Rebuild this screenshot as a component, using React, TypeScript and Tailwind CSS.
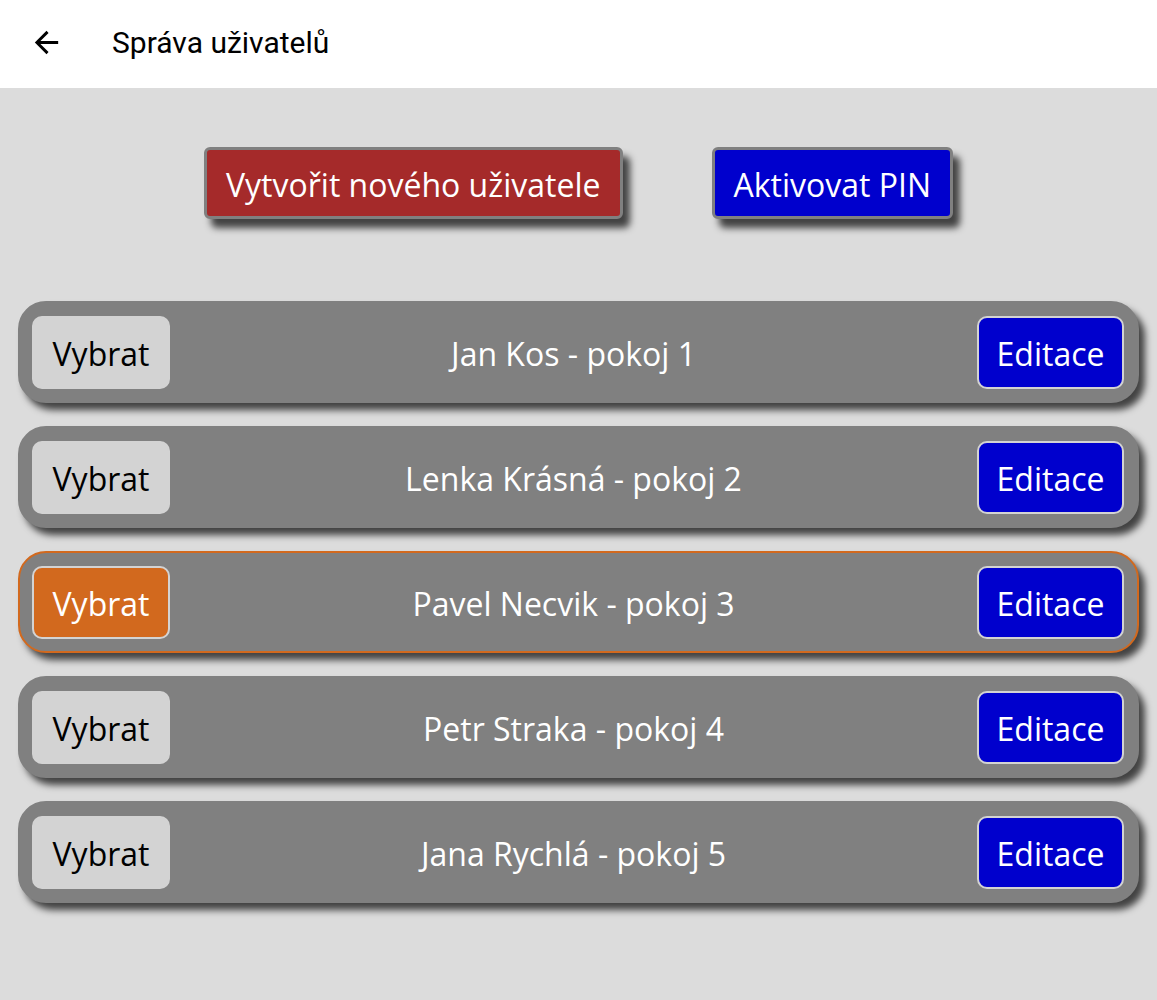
interface User {
  id: number;
  name: string;
  room: number;
}

const users: User[] = [
  { id: 1, name: 'Jan Kos', room: 1 },
  { id: 2, name: 'Lenka Krásná', room: 2 },
  { id: 3, name: 'Pavel Necvik', room: 3 },
  { id: 4, name: 'Petr Straka', room: 4 },
  { id: 5, name: 'Jana Rychlá', room: 5 },
];

const selectedId = 3;

function UserRow({ user }: { user: User }) {
  const selected = user.id === selectedId;
  return (
    <div
      className={
        selected
          ? 'flex h-[102px] items-center justify-between rounded-[28px] border-2 border-[#d2691e] bg-[#808080] pl-[12px] pr-[13px] shadow-[6px_7px_7px_rgba(0,0,0,0.7)]'
          : 'flex h-[102px] items-center justify-between rounded-[28px] border-2 border-[#808080] bg-[#808080] pl-[12px] pr-[13px] shadow-[6px_7px_7px_rgba(0,0,0,0.7)]'
      }
    >
      <button
        className={
          selected
            ? 'h-[73px] w-[138px] rounded-[10px] border-2 border-[#d3d3d3] bg-[#d2691e] pt-[4px] text-[32px] text-white'
            : 'h-[73px] w-[138px] rounded-[10px] border-2 border-[#d3d3d3] bg-[#d3d3d3] pt-[4px] text-[32px] text-black'
        }
      >
        Vybrat
      </button>
      <span className="pt-[4px] text-[32px] text-white">
        {user.name} - pokoj {user.room}
      </span>
      <button className="h-[73px] w-[147px] rounded-[10px] border-2 border-[#d3d3d3] bg-[#0000cd] pt-[4px] text-[32px] text-white">
        Editace
      </button>
    </div>
  );
}

export default function App() {
  return (
    <div className="min-h-[1000px] bg-[#dcdcdc] font-['Open_Sans',sans-serif]">
      <header className="flex h-[88px] items-center bg-white px-[29px]">
        {/* material-style back arrow */}
        <svg viewBox="0 0 24 24" className="mb-[3px] h-[35px] w-[35px] fill-black">
          <path d="M20 11H7.83l5.59-5.59L12 4l-8 8 8 8 1.41-1.41L7.83 13H20v-2z" />
        </svg>
        <h1 className="ml-[48px] pb-[4px] font-['Roboto',sans-serif] text-[30px] font-normal text-black">
          Správa uživatelů
        </h1>
      </header>

      <div className="flex justify-center gap-[89px] pt-[59px]">
        <button className="h-[72px] rounded-[6px] border-[3px] border-[#808080] bg-[#a52a2a] px-[19px] pt-[4px] text-[32px] text-white shadow-[7px_9px_7px_rgba(0,0,0,0.7)]">
          Vytvořit nového uživatele
        </button>
        <button className="h-[72px] rounded-[6px] border-[3px] border-[#808080] bg-[#0000cd] px-[19px] pt-[4px] text-[32px] text-white shadow-[7px_9px_7px_rgba(0,0,0,0.7)]">
          Aktivovat PIN
        </button>
      </div>

      <div className="flex flex-col gap-[23px] pt-[82px] pl-[18px] pr-[18px]">
        {users.map((u) => (
          <UserRow key={u.id} user={u} />
        ))}
      </div>
    </div>
  );
}
